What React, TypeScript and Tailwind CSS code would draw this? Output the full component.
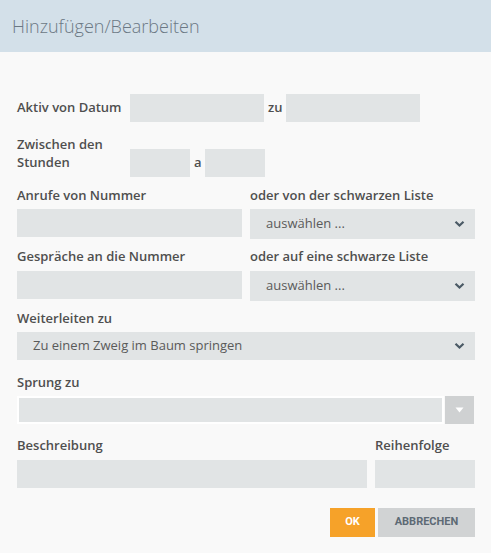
import React from "react";

const font = { fontFamily: '"Open Sans", "Liberation Sans", sans-serif' };

function Chevron() {
  return (
    <svg width="11" height="8" viewBox="0 0 11 8" className="shrink-0">
      <path d="M1.5 1.8 L5.5 5.6 L9.5 1.8" fill="none" stroke="#4b5a66" strokeWidth="2.2" />
    </svg>
  );
}

function Select({ text, h }: { text: string; h: string }) {
  return (
    <div className={`flex items-center justify-between bg-[#e1e4e5] pl-[16px] pr-[10px] ${h}`}>
      <span className="text-[13px] text-[#5a5a5a]">{text}</span>
      <Chevron />
    </div>
  );
}

export default function App() {
  return (
    <div className="w-[491px] h-[553px] bg-[#f9f9f9] text-[#4f4f4f]" style={font}>
      <div className="h-[52px] bg-[#d3e0e9] flex items-center pl-[12px]">
        <span className="text-[18px] font-light text-[#6b7884] leading-none">Hinzufügen/Bearbeiten</span>
      </div>
      <div className="pl-[17px] pr-[16px] pt-[42px]">
        {/* Row 1 */}
        <div className="flex items-center h-[28px]">
          <div className="w-[113px] text-[13px] font-semibold">Aktiv von Datum</div>
          <div className="w-[134px] h-[28px] bg-[#e1e4e5]" />
          <div className="w-[22px] pl-[4px] text-[13px] font-semibold">zu</div>
          <div className="w-[134px] h-[28px] bg-[#e1e4e5]" />
        </div>
        {/* Row 2 */}
        <div className="flex items-start mt-[13px]">
          <div className="w-[113px] text-[13px] font-semibold leading-[18px]">
            Zwischen den
            <br />
            Stunden
          </div>
          <div className="flex items-center mt-[14px]">
            <div className="w-[60px] h-[28px] bg-[#e1e4e5]" />
            <div className="w-[15px] pl-[4px] text-[13px] font-semibold">a</div>
            <div className="w-[60px] h-[28px] bg-[#e1e4e5]" />
          </div>
        </div>
        {/* Row 3 */}
        <div className="grid grid-cols-[225px_225px] gap-x-[8px] mt-[9px]">
          <div className="text-[13px] font-semibold leading-[18px]">Anrufe von Nummer</div>
          <div className="text-[13px] font-semibold leading-[18px]">oder von der schwarzen Liste</div>
          <div className="h-[28px] bg-[#e1e4e5] mt-[5px]" />
          <div className="mt-[5px]">
            <Select text="auswählen ..." h="h-[30px]" />
          </div>
        </div>
        {/* Row 4 */}
        <div className="grid grid-cols-[225px_225px] gap-x-[8px] mt-[8px]">
          <div className="text-[13px] font-semibold leading-[18px]">Gespräche an die Nummer</div>
          <div className="text-[13px] font-semibold leading-[18px]">oder auf eine schwarze Liste</div>
          <div className="h-[28px] bg-[#e1e4e5] mt-[6px]" />
          <div className="mt-[6px]">
            <Select text="auswählen ..." h="h-[30px]" />
          </div>
        </div>
        {/* Weiterleiten */}
        <div className="mt-[8px] text-[13px] font-semibold leading-[18px]">Weiterleiten zu</div>
        <div className="mt-[5px]">
          <Select text="Zu einem Zweig im Baum springen" h="h-[28px]" />
        </div>
        {/* Sprung zu */}
        <div className="mt-[13px] text-[13px] font-semibold leading-[18px]">Sprung zu</div>
        <div className="mt-[5px] flex h-[28px] gap-[1px]">
          <div className="flex-1 bg-white p-[2px]">
            <div className="h-full bg-[#e1e4e5]" />
          </div>
          <div className="w-[29px] bg-[#cfd1d2] flex items-center justify-center mr-[1px]">
            <svg width="9" height="6" viewBox="0 0 9 6">
              <path d="M0.5 0.5 L8.5 0.5 L4.5 5.5 Z" fill="#ffffff" />
            </svg>
          </div>
        </div>
        {/* Beschreibung */}
        <div className="grid grid-cols-[350px_100px] gap-x-[8px] mt-[12px]">
          <div className="text-[13px] font-semibold leading-[18px]">Beschreibung</div>
          <div className="text-[13px] font-semibold leading-[18px]">Reihenfolge</div>
          <div className="h-[28px] bg-[#e1e4e5] mt-[6px]" />
          <div className="h-[28px] bg-[#e1e4e5] mt-[6px]" />
        </div>
        {/* Buttons */}
        <div className="flex justify-end gap-[3px] mt-[20px]">
          <button
            className="w-[45px] h-[29px] bg-[#f6a229] text-white text-[11px] font-bold"
            style={{ fontFamily: 'Roboto, "Liberation Sans", sans-serif' }}
          >
            OK
          </button>
          <button
            className="w-[97px] h-[29px] bg-[#d1d3d4] text-[#5d6a74] text-[11px] font-bold"
            style={{ fontFamily: 'Roboto, "Liberation Sans", sans-serif' }}
          >
            ABBRECHEN
          </button>
        </div>
      </div>
    </div>
  );
}
